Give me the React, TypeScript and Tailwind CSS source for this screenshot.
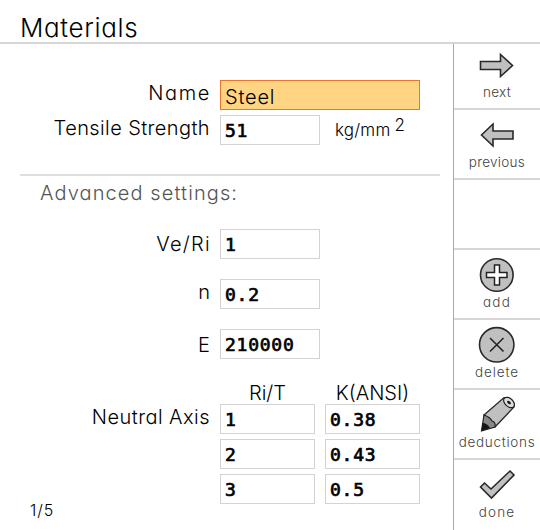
import type { ReactNode } from 'react';

function Field({ className = '', children }: { className?: string; children: ReactNode }) {
  return (
    <div
      className={`flex h-[30px] shrink-0 items-center border border-[#d3d3d3] bg-white pl-1 pt-px font-['DejaVu_Sans_Mono',monospace] text-[18px] font-normal leading-none tracking-[0.75px] [-webkit-text-stroke:0.7px_black] ${className}`}
    >
      {children}
    </div>
  );
}

function Label({ className = '', children }: { className?: string; children: ReactNode }) {
  return (
    <div className={`flex h-[30px] w-[210px] shrink-0 justify-end whitespace-nowrap text-[20px] leading-[27px] ${className}`}>
      {children}
    </div>
  );
}

function Tool({ label, className = '', icon }: { label?: string; className?: string; icon?: ReactNode }) {
  return (
    <div className="flex h-[70px] flex-col items-center border-b-2 border-[#d6d6d6] last:border-b-0">
      <div className="h-[44px] w-[86px] shrink-0">{icon}</div>
      {label && <div className={`h-5 whitespace-nowrap text-[13.5px] leading-[16px] text-[#444] ${className}`}>{label}</div>}
    </div>
  );
}

const stroke = { stroke: '#292929', strokeWidth: 1.6, fill: '#c0c0c0' };

const NextIcon = (
  <svg width="86" height="44" viewBox="0 0 86 44">
    <path d="M26.500 21.500H46.500V14.500L58.500 25.500L46.500 36.500V29.500H26.500Z" {...stroke} />
  </svg>
);
const PreviousIcon = (
  <svg width="86" height="44" viewBox="0 0 86 44">
    <path d="M59 21H39V14L27.500 25L39 36V29H59Z" {...stroke} />
  </svg>
);
const AddIcon = (
  <svg width="86" height="44" viewBox="0 0 86 44">
    <circle cx="42.800" cy="25" r="16.300" {...stroke} />
    <path d="M40.500 15H45.500V22.500H53V27.500H45.500V35H40.500V27.500H32.500V22.500H40.500Z" stroke="#222" strokeWidth="1.500" fill="#fff" />
  </svg>
);
const DeleteIcon = (
  <svg width="86" height="44" viewBox="0 0 86 44">
    <circle cx="42.700" cy="24.800" r="17.200" {...stroke} />
    <path d="M36 18L49.500 31.500M49.500 18L36 31.500" stroke="#202020" strokeWidth="1.500" />
  </svg>
);
const PencilIcon = (
  <svg width="86" height="44" viewBox="0 0 86 44">
    <path d="M30 25L49.500 8Q54 7 58 10Q61 13 60 17L41 37Z" fill="#c0c0c0" stroke="#292929" strokeWidth="1.300" />
    <path d="M30 25L27.500 41L41 37Q42 32 38 31Q36 27 30 25Z" fill="#888" stroke="#222" strokeWidth="1.200" />
    <path d="M28.500 33L27.500 41L36 38Q33 33 28.500 33Z" fill="#151515" />
    <ellipse cx="55" cy="12.500" rx="6.300" ry="4" transform="rotate(43 55 12.500)" fill="#dedede" stroke="#222" strokeWidth="1.200" />
    <ellipse cx="55" cy="12.500" rx="2.200" ry="1.300" transform="rotate(43 55 12.500)" fill="#171717" />
  </svg>
);
const DoneIcon = (
  <svg width="86" height="44" viewBox="0 0 86 44">
    <path d="M26.500 27L30.500 23L37 29L56 11L60 15L37.500 38Z" {...stroke} />
  </svg>
);

const axis = [
  ['1', '0.38'],
  ['2', '0.43'],
  ['3', '0.5'],
];

export default function App() {
  return (
    <div className="flex h-[530px] w-[540px] flex-col overflow-hidden bg-white font-['Inter',sans-serif] font-light text-black [font-feature-settings:'cv11']">
      <header className="h-[44px] shrink-0 border-b-2 border-[#d6d6d6] pl-5 pt-[11px] text-[26px] leading-[33px] tracking-[0.65px]">
        Materials
      </header>
      <div className="flex h-[486px]">
        <main className="w-[453px] shrink-0">
          <div className="flex gap-[10px] pt-9">
            <Label className="tracking-[1.6px]"><span className="-mr-px">Name</span></Label>
            <div className="flex h-[30px] w-[200px] items-center border border-[#e8762d] bg-[#ffd483] pl-1 pt-[3px] text-[20px] leading-none tracking-[0.8px]">Steel</div>
          </div>
          <div className="mt-[5px] flex gap-[10px]">
            <Label className="tracking-[0.4px]">Tensile Strength</Label>
            <Field className="w-[100px]">51</Field>
            <div className="ml-[5px] flex gap-1 whitespace-nowrap text-[17px] leading-[30px]">
              <span className="tracking-[0.2px]">kg/mm</span>
              <span className="leading-[21px]">2</span>
            </div>
          </div>
          <hr className="ml-5 mt-[29px] w-[420px] border-t-2 border-[#dedede]" />
          <h2 className="h-[53px] pl-10 pt-1 text-[20px] leading-[27px] tracking-[1.1px] text-[#555]">Advanced settings:</h2>
          <div className="flex flex-col gap-5">
            <div className="flex gap-[10px]">
              <Label className="pt-[2px] tracking-[1.3px]"><span className="-mr-px">Ve/Ri</span></Label>
              <Field className="w-[100px]">1</Field>
            </div>
            <div className="flex gap-[10px]">
              <Label>n</Label>
              <Field className="w-[100px]">0.2</Field>
            </div>
            <div className="flex gap-[10px]">
              <Label className="pt-[3px]">E</Label>
              <Field className="w-[100px]">210000</Field>
            </div>
          </div>
          <div className="ml-[220px] mt-[22px] grid h-[23px] grid-cols-[95px_95px] gap-[10px] text-center text-[20px] leading-[24px]">
            <span>Ri/T</span>
            <span className="whitespace-nowrap">K(ANSI)</span>
          </div>
          <div className="flex gap-[10px]">
            <Label className="tracking-[0.45px]">Neutral Axis</Label>
            <div className="grid grid-cols-[95px_95px] gap-x-[10px] gap-y-[5px]">
              {axis.flat().map((value, i) => (
                <Field key={i}>{value}</Field>
              ))}
            </div>
          </div>
          <div className="pl-[30px] text-[16px] leading-[12px] tracking-[1px]">1/5</div>
        </main>
        <aside className="h-[487px] w-[87px] border-l border-[#aaa]">
          <div className="-mt-1">
            <Tool label="next" icon={NextIcon} className="tracking-[0.3px]" />
            <Tool label="previous" icon={PreviousIcon} className="tracking-[0.3px]" />
            <Tool />
            <Tool label="add" icon={AddIcon} className="tracking-[1.2px]" />
            <Tool label="delete" icon={DeleteIcon} className="tracking-[0.9px]" />
            <Tool label="deductions" icon={PencilIcon} className="tracking-[0.7px]" />
            <Tool label="done" icon={DoneIcon} className="tracking-[1.1px]" />
          </div>
        </aside>
      </div>
    </div>
  );
}
